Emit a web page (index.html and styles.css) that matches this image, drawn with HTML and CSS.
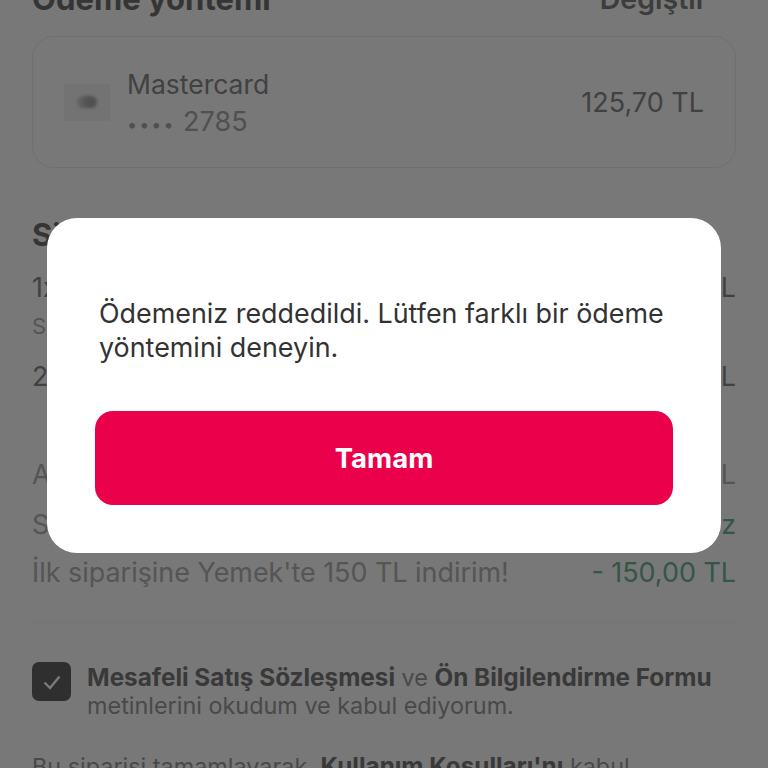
FILE: index.html
```html
<!DOCTYPE html>
<html lang="tr">
<head>
	<meta charset="UTF-8">
	<title>Ödeme</title>
	<link rel="stylesheet" href="styles.css">
</head>
<body>

	<div class="page">
		<div class="row section-head">
			<h2>Ödeme yöntemi</h2>
			<span class="change">Değiştir</span>
		</div>

		<div class="pay-card">
			<div class="card-logo"><span class="logo-dot"></span></div>
			<div class="card-info">
				<div class="card-name">Mastercard</div>
				<div class="card-number"><span class="card-dots">••••</span> 2785</div>
			</div>
			<div class="card-price">125,70 TL</div>
		</div>

		<h2 class="summary-title">Sipariş özeti</h2>

		<div class="row line first-line"><span>1x Menü</span><span>100,00 TL</span></div>
		<div class="sub-line">Seçimler</div>
		<div class="row line second-line"><span>2x Menü</span><span>175,70 TL</span></div>

		<div class="row line total-line"><span>Ara toplam</span><span>275,70 TL</span></div>
		<div class="row line service-line"><span>Servis ücreti</span><span class="green">Ücretsiz</span></div>
		<div class="row line promo-line"><span>İlk siparişine Yemek'te 150 TL indirim!</span><span class="green">- 150,00 TL</span></div>

		<div class="divider"></div>

		<div class="agree">
			<div class="checkbox">
				<svg width="22" height="22" viewBox="0 0 22 22"><path d="M3.5 11.5l5.5 5.5L18.5 5.5" fill="none" stroke="#fff" stroke-width="2.4"/></svg>
			</div>
			<p><strong>Mesafeli Satış Sözleşmesi</strong> ve <strong>Ön Bilgilendirme Formu</strong> metinlerini okudum ve kabul ediyorum.</p>
		</div>

		<p class="terms">Bu siparişi tamamlayarak, <strong>Kullanım Koşulları'nı</strong> kabul</p>
	</div>

	<div class="overlay">
		<div class="modal">
			<p class="modal-text">Ödemeniz reddedildi. Lütfen farklı bir ödeme yöntemini deneyin.</p>
			<button class="modal-btn">Tamam</button>
		</div>
	</div>

</body>
</html>
```

FILE: styles.css
```css
html, body {
	height: 768px;
	margin: 0;
	overflow: hidden;
}

body {
	font-family: Inter, "Liberation Sans", sans-serif;
	background: #fbfbfb;
	color: #808080;
	position: relative;
}

.page {
	padding: 0 32px;
	margin-top: -18px;
}

.row {
	display: flex;
	justify-content: space-between;
}

h2 {
	margin: 0;
	font-size: 31px;
	line-height: 34px;
	font-weight: 700;
	color: #707070;
}

.change {
	font-size: 28.5px;
	line-height: 34px;
	font-weight: 600;
	margin-right: 29px;
	color: #808080;
}

.pay-card {
	display: flex;
	align-items: center;
	box-sizing: border-box;
	height: 132px;
	margin-top: 20px;
	padding: 0 31px;
	border: 1.5px solid #e8e8e8;
	border-radius: 22px;
}

.card-logo {
	width: 46px;
	height: 37px;
	background: #f0f0f0;
	margin-right: 17px;
	display: flex;
	align-items: center;
	justify-content: center;
}

.logo-dot {
	width: 20px;
	height: 12px;
	border-radius: 6px;
	background: linear-gradient(to right, #d4d4d4, #a8a8a8 60%);
	filter: blur(1.5px);
}

.card-info {
	flex: 1;
	padding-top: 4px;
}

.card-name {
	font-size: 26.5px;
	line-height: 37px;
	color: #888;
}

.card-number {
	font-size: 27px;
	line-height: 37px;
	color: #a8a8a8;
}

.card-dots {
	font-size: 18px;
	letter-spacing: 2px;
}

.card-price {
	font-size: 27px;
	color: #888;
}

.summary-title {
	margin-top: 50px;
}

.line {
	font-size: 26.9px;
	line-height: 34px;
	color: #b1b1b1;
}

.first-line {
	margin-top: 18px;
	color: #888;
}

.sub-line {
	font-size: 22px;
	line-height: 30px;
	margin-top: 7px;
	color: #b1b1b1;
}

.second-line {
	margin-top: 18px;
	color: #888;
}

.total-line {
	margin-top: 64px;
}

.service-line {
	margin-top: 16px;
}

.promo-line {
	margin-top: 14px;
}

.green {
	color: #6bb596;
}

.divider {
	height: 1px;
	background: #f2f2f2;
	margin-top: 33px;
}

.agree {
	display: flex;
	gap: 16px;
	margin-top: 39px;
}

.checkbox {
	width: 39px;
	height: 39px;
	flex: none;
	background: #626262;
	border-radius: 7px;
	display: flex;
	align-items: center;
	justify-content: center;
}

.agree p {
	margin: 1px 0 0;
	font-size: 23.4px;
	line-height: 28px;
	color: #999;
}

strong {
	font-size: 24.3px;
	color: #777;
}

.terms {
	margin: 32px 0 0;
	font-size: 23.4px;
	line-height: 28px;
	color: #999;
}

.overlay {
	position: absolute;
	inset: 0;
	background: rgba(0, 0, 0, 0.52);
}

.modal {
	position: absolute;
	left: 47px;
	top: 218px;
	width: 674px;
	height: 335px;
	box-sizing: border-box;
	padding: 78px 48px 48px;
	background: #fff;
	border-radius: 30px;
}

.modal-text {
	margin: 0;
	font-size: 26.9px;
	line-height: 34px;
	color: #333;
	padding-left: 4px;
}

.modal-btn {
	display: block;
	width: 100%;
	height: 94px;
	margin-top: 47px;
	background: #eb004b;
	color: #fff;
	border: none;
	border-radius: 18px;
	font-family: inherit;
	font-size: 27.5px;
	font-weight: 700;
}
```
